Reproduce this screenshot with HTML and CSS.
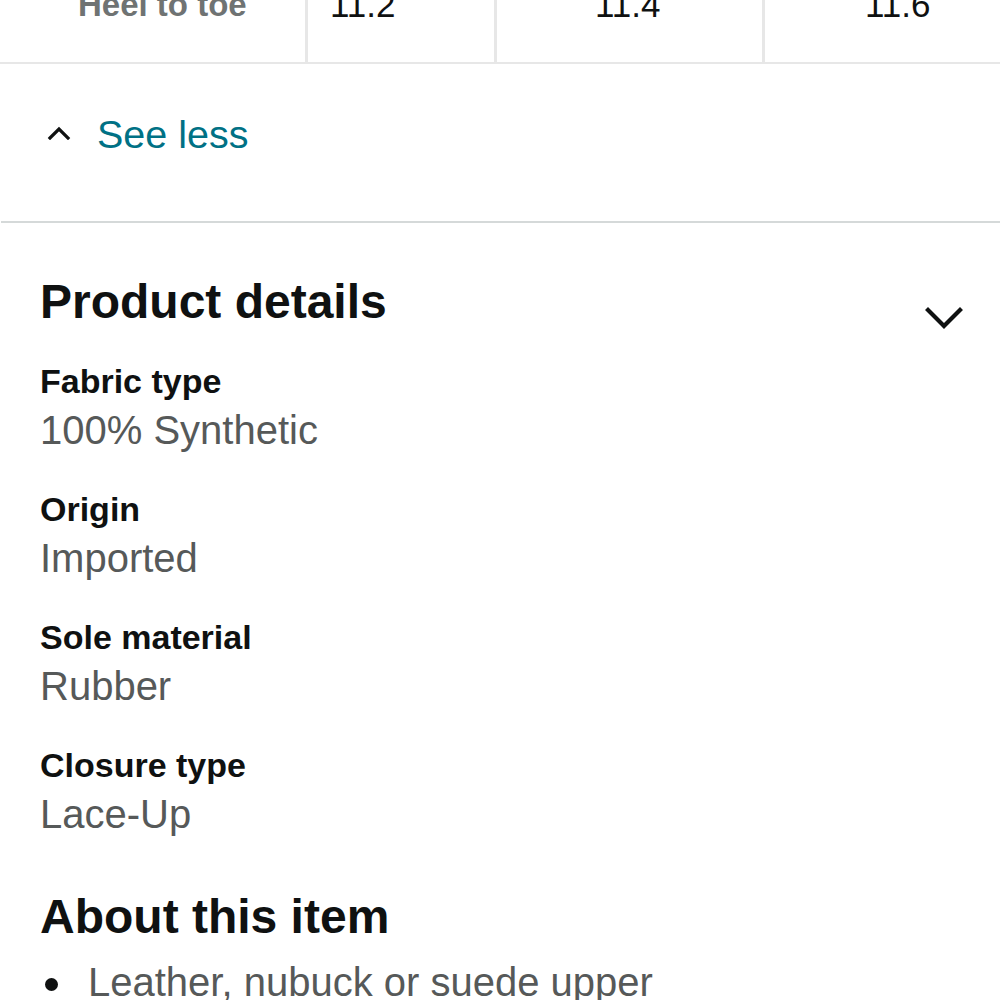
FILE: index.html
```html
<!DOCTYPE html>
<html lang="en">
<head>
  <meta charset="UTF-8" />
  <meta name="viewport" content="width=device-width, initial-scale=1.0"/>
  <title>Product details</title>
  <link rel="stylesheet" href="styles.css">
</head>
<body>
  <!-- size chart, last row -->
  <div class="size-table">
    <div class="size-row">
      <div class="cell cell-head">Heel to toe</div>
      <div class="cell cell-a">11.2</div>
      <div class="cell cell-b">11.4</div>
      <div class="cell cell-c">11.6</div>
    </div>
  </div>

  <div class="see-less">
    <svg class="chev-up" width="24" height="14" viewBox="0 0 24 14">
      <polyline points="3,12 12,3 21,12" fill="none" stroke="#0f1111" stroke-width="3.2" stroke-linecap="square"/>
    </svg>
    <a href="#">See less</a>
  </div>

  <hr class="divider">

  <section class="details">
    <div class="details-head">
      <h2>Product details</h2>
      <svg class="chev-down" width="40" height="24" viewBox="0 0 40 24">
        <polyline points="3,4 19,20 35,4" fill="none" stroke="#0f1111" stroke-width="4.2" stroke-linecap="square"/>
      </svg>
    </div>

    <div class="attr">
      <div class="attr-label">Fabric type</div>
      <div class="attr-value">100% Synthetic</div>
    </div>
    <div class="attr">
      <div class="attr-label">Origin</div>
      <div class="attr-value">Imported</div>
    </div>
    <div class="attr">
      <div class="attr-label">Sole material</div>
      <div class="attr-value">Rubber</div>
    </div>
    <div class="attr">
      <div class="attr-label">Closure type</div>
      <div class="attr-value">Lace-Up</div>
    </div>
  </section>

  <section class="about">
    <h2>About this item</h2>
    <ul class="bullets">
      <li>Leather, nubuck or suede upper</li>
    </ul>
  </section>
</body>
</html>
```

FILE: styles.css
```css
* {
  margin: 0;
  padding: 0;
  box-sizing: border-box;
}
body {
  font-family: "Liberation Sans", Arial, sans-serif;
  color: #0f1111;
  background: #fff;
  overflow: hidden;
}

/* size table */
.size-table {
  margin-top: -13px;
}
.size-row {
  display: grid;
  grid-template-columns: 305px 189px 268px 1fr;
  height: 77px;
  border-bottom: 2px solid #e7e7e7;
}
.cell {
  font-size: 35px;
  line-height: 35px;
  white-space: nowrap;
}
.cell-head {
  font-size: 33px;
  font-weight: bold;
  color: #6f7373;
  padding-left: 78px;
}
.cell-a,
.cell-b,
.cell-c {
  border-left: 3px solid #e7e7e7;
}
.cell-a { padding-left: 22px; }
.cell-b { padding-left: 98px; }
.cell-c { padding-left: 100px; }

/* see less */
.see-less {
  display: flex;
  align-items: flex-start;
  padding: 46px 0 0 47px;
}
.chev-up {
  margin-top: 16px;
}
.see-less a {
  font-size: 39.5px;
  line-height: 48px;
  color: #007185;
  text-decoration: none;
  margin-left: 26px;
}
.divider {
  border: none;
  border-top: 2px solid #d5d9d9;
  margin: 63px 0 0 1px;
}

/* product details */
.details {
  padding: 51px 35px 0 40px;
}
.details-head {
  display: flex;
  justify-content: space-between;
  align-items: flex-end;
  margin-bottom: 29px;
}
h2 {
  font-size: 48px;
  line-height: 56px;
  font-weight: bold;
}
.attr {
  margin-bottom: 30px;
}
.attr-label {
  font-size: 34px;
  line-height: 44px;
  font-weight: bold;
}
.attr-value {
  font-size: 40px;
  line-height: 54px;
  color: #565959;
}

/* about */
.about {
  padding: 18px 40px 0 40px;
}
.bullets {
  list-style: none;
  margin-top: 10px;
}
.bullets li {
  position: relative;
  font-size: 40px;
  line-height: 54px;
  color: #565959;
  padding-left: 48px;
}
.bullets li::before {
  content: "";
  position: absolute;
  left: 5px;
  top: 23px;
  width: 13px;
  height: 13px;
  border-radius: 50%;
  background: #0f1111;
}
```
